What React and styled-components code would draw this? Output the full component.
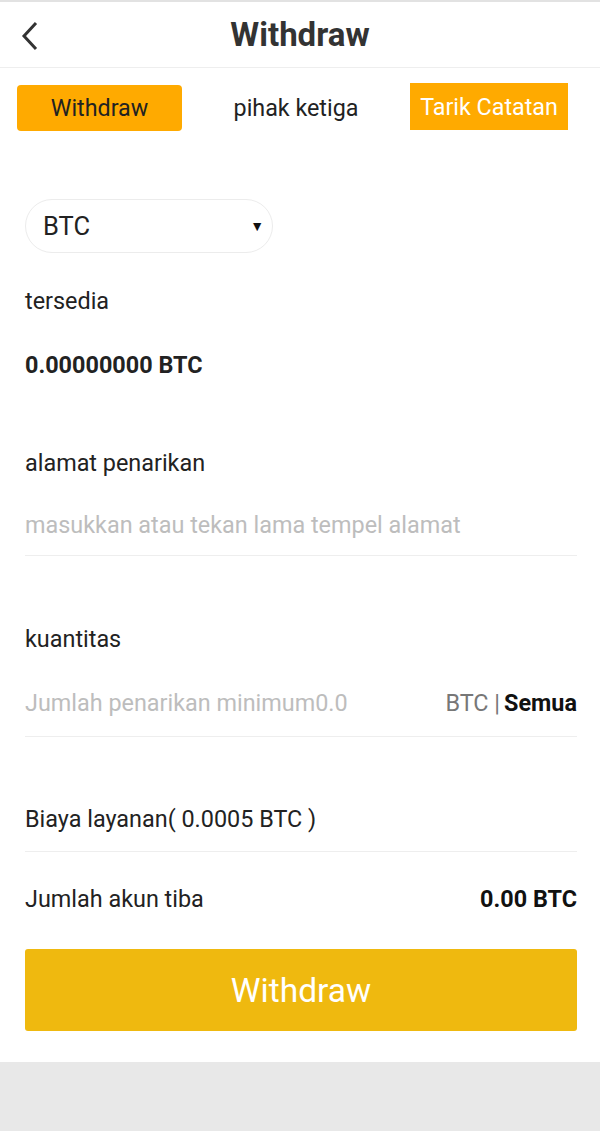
import React, { useState } from "react";
import styled, { createGlobalStyle } from "styled-components";

const GlobalStyle = createGlobalStyle`
	html, body {
		margin: 0;
		padding: 0;
		background: #e8e8e8;
		font-family: Roboto, "Liberation Sans", sans-serif;
	}
	* {
		box-sizing: border-box;
	}
`;

const Page = styled.div`
	background: #fff;
	border-top: 2px solid #e2e2e2;
	padding-bottom: 31px;
`;

const Header = styled.div`
	position: relative;
	height: 66px;
	display: flex;
	align-items: center;
	justify-content: center;
	border-bottom: 1px solid #eeeeee;
`;

const Back = styled.button`
	position: absolute;
	left: 14px;
	top: 16px;
	width: 32px;
	height: 36px;
	border: none;
	background: none;
	padding: 0;
	display: flex;
	align-items: center;
	justify-content: center;
	cursor: pointer;
`;

const Title = styled.h1`
	margin: 0;
	font-size: 33px;
	font-weight: 700;
	color: #333;
`;

const Tabs = styled.div`
	display: flex;
	align-items: center;
	justify-content: space-between;
	padding: 17px 32px 0 17px;
`;

const Tab = styled.div`
	display: flex;
	align-items: center;
	justify-content: center;
	height: ${(p) => (p.$square ? "47px" : "46px")};
	width: ${(p) => (p.$square ? "158px" : "165px")};
	padding: 0 4px;
	font-size: 23.3px;
	background: ${(p) => (p.$filled ? "#ffaa00" : "transparent")};
	color: ${(p) => (p.$square ? "#fff" : "#222")};
	border-radius: ${(p) => (p.$square ? "0" : "4px")};
	margin-top: ${(p) => (p.$square ? "-3px" : "0")};
	white-space: nowrap;
	cursor: pointer;
`;

const Body = styled.div`
	padding: 0 23px 0 25px;
`;

const Select = styled.div`
	margin-top: 68px;
	width: 248px;
	height: 54px;
	border: 1px solid #ececec;
	border-radius: 27px;
	display: flex;
	align-items: center;
	justify-content: space-between;
	padding: 0 8px 0 17px;
	font-size: 25.5px;
	color: #222;
`;

const Arrow = styled.span`
	font-size: 14px;
	color: #111;
`;

const Label = styled.div`
	margin-top: ${(p) => p.$top}px;
	line-height: 30px;
	font-size: 23.4px;
	color: #222;
	font-weight: ${(p) => (p.$bold ? 700 : 400)};
`;

const InputRow = styled.div`
	margin-top: ${(p) => p.$top}px;
	height: ${(p) => p.$h}px;
	display: flex;
	align-items: center;
	border-bottom: 1px solid #eeeeee;
	font-size: 23.4px;
`;

const Input = styled.input`
	flex: 1;
	min-width: 0;
	border: none;
	outline: none;
	padding: 0;
	font-family: inherit;
	font-size: 23.4px;
	color: #222;
	background: transparent;
	&::placeholder {
		color: #bdbdbd;
	}
`;

const Unit = styled.span`
	color: #777;
	white-space: nowrap;
`;

const All = styled.span`
	color: #111;
	font-weight: 700;
	margin-left: 4px;
`;

const InfoRow = styled.div`
	margin-top: ${(p) => p.$top}px;
	height: ${(p) => p.$h}px;
	display: flex;
	align-items: center;
	justify-content: space-between;
	font-size: 23.4px;
	color: #222;
	border-bottom: ${(p) => (p.$line ? "1px solid #eeeeee" : "none")};
`;

const Strong = styled.span`
	font-weight: 700;
	color: #111;
`;

const Submit = styled.button`
	margin-top: 20px;
	width: 100%;
	height: 82px;
	border: none;
	border-radius: 3px;
	background: #efb90f;
	color: #fff;
	font-family: inherit;
	font-size: 33.5px;
	cursor: pointer;
`;

const App = () => {
	const [address, setAddress] = useState("");
	const [amount, setAmount] = useState("");

	return (
		<>
			<GlobalStyle />
			<Page>
				<Header>
					<Back aria-label="back">
						<svg width="20" height="30" viewBox="0 0 20 30">
							<path d="M16 2 L4 15 L16 28" fill="none" stroke="#333" strokeWidth="3" />
						</svg>
					</Back>
					<Title>Withdraw</Title>
				</Header>
				<Tabs>
					<Tab $filled>Withdraw</Tab>
					<Tab>pihak ketiga</Tab>
					<Tab $filled $square>Tarik Catatan</Tab>
				</Tabs>
				<Body>
					<Select>
						<span>BTC</span>
						<Arrow>▼</Arrow>
					</Select>
					<Label $top={33}>tersedia</Label>
					<Label $top={34} $bold>0.00000000 BTC</Label>
					<Label $top={68}>alamat penarikan</Label>
					<InputRow $top={16} $h={62}>
						<Input
							placeholder="masukkan atau tekan lama tempel alamat"
							value={address}
							onChange={(e) => setAddress(e.target.value)}
						/>
					</InputRow>
					<Label $top={68}>kuantitas</Label>
					<InputRow $top={15} $h={68}>
						<Input
							placeholder="Jumlah penarikan minimum0.0"
							value={amount}
							onChange={(e) => setAmount(e.target.value)}
						/>
						<Unit>BTC |</Unit>
						<All>Semua</All>
					</InputRow>
					<InfoRow $top={49} $h={66} $line>
						<span>Biaya layanan( 0.0005 BTC )</span>
					</InfoRow>
					<InfoRow $top={17} $h={60}>
						<span>Jumlah akun tiba</span>
						<Strong>0.00 BTC</Strong>
					</InfoRow>
					<Submit>Withdraw</Submit>
				</Body>
			</Page>
		</>
	);
};

export default App;
